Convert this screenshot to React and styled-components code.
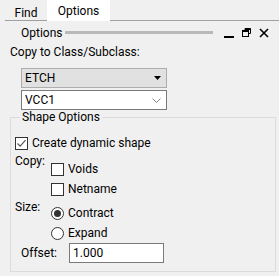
import React from 'react';
import styled, { createGlobalStyle } from 'styled-components';

const GlobalStyle = createGlobalStyle`
    html, body {
        margin: 0;
        padding: 0;
        background: #f0f0f0;
    }
    body {
        font-family: Roboto, "Liberation Sans", Arial, sans-serif;
        font-size: 12px;
        color: #000;
    }
    * { box-sizing: border-box; }
`;

const Panel = styled.div`
    width: 279px;
    height: 276px;
    background: #f0f0f0;
    overflow: hidden;
`;

const TabBar = styled.div`
    display: flex;
    align-items: flex-end;
    height: 21px;
    margin-left: 5px;
    border-bottom: 1px solid #a0a0a0;
`;

const Tab = styled.div`
    display: flex;
    align-items: center;
    justify-content: center;
    width: ${p => p.width}px;
    height: ${p => (p.active ? 21 : 15)}px;
    margin-bottom: ${p => (p.active ? -1 : 0)}px;
    background: ${p => (p.active ? '#fff' : '#f0f0f0')};
    line-height: 14px;
`;

const TitleRow = styled.div`
    display: flex;
    align-items: center;
    height: 23px;
    padding: 0 10px 0 21px;
`;

const Grip = styled.div`
    flex: 1;
    height: 3px;
    margin: 0 11px 0 2px;
    background: #b9b9b9;
`;

const WinButtons = styled.div`
    display: flex;
    align-items: center;
    gap: 8px;
    svg { display: block; }
`;

const Label = styled.div`
    height: 16px;
    line-height: 16px;
    padding-left: ${p => p.indent || 0}px;
`;

const Select = styled.div`
    display: flex;
    align-items: center;
    justify-content: space-between;
    width: 146px;
    height: 20px;
    margin: ${p => p.top}px 0 0 21px;
    padding: 0 5px 0 3px;
    background: ${p => (p.editable ? '#fff' : '#e1e1e1')};
    border: 1px solid ${p => (p.editable ? '#7a7a7a' : '#adadad')};
`;

const Group = styled.fieldset`
    height: 162px;
    margin: 0 3px 0 10px;
    padding: 9px 0 0 4px;
    border: 1px solid #dcdcdc;
    min-inline-size: 0;
`;

const Legend = styled.legend`
    margin-left: 5px;
    padding: 0 2px;
    line-height: 14px;
`;

const Row = styled.label`
    display: flex;
    align-items: center;
    gap: 4px;
    height: 20px;
`;

const Section = styled.div`
    display: flex;
`;

const SectionLabel = styled.div`
    width: 36px;
    line-height: 14px;
    padding-top: 1px;
`;

const Options = styled.div`
    display: flex;
    flex-direction: column;
    padding-top: ${p => p.top || 0}px;
`;

const Box = styled.span`
    display: flex;
    align-items: center;
    justify-content: center;
    width: 13px;
    height: 13px;
    background: #fff;
    border: 1px solid #333;
`;

const Radio = styled.span`
    display: flex;
    align-items: center;
    justify-content: center;
    width: 13px;
    height: 13px;
    background: #fff;
    border: 1px solid #333;
    border-radius: 50%;
    &::after {
        content: '';
        display: ${p => (p.checked ? 'block' : 'none')};
        width: 7px;
        height: 7px;
        border-radius: 50%;
        background: #333;
    }
`;

const OffsetRow = styled.div`
    display: flex;
    align-items: center;
    height: 20px;
    padding-left: 6px;
`;

const OffsetLabel = styled.span`
    width: 48px;
`;

const Input = styled.div`
    width: 95px;
    height: 20px;
    line-height: 18px;
    padding-left: 3px;
    background: #fff;
    border: 1px solid #7a7a7a;
`;

const Check = ({ checked }) => (
    <Box>
        {checked && (
            <svg width="11" height="11" viewBox="0 0 11 11">
                <path d="M1.5 5.5 L4.2 8.2 L9.5 2.2" fill="none" stroke="#555" strokeWidth="1.2" />
            </svg>
        )}
    </Box>
);

export default function App() {
    return (
        <Panel>
            <GlobalStyle />
            <TabBar>
                <Tab width={42}>Find</Tab>
                <Tab width={63} active>Options</Tab>
            </TabBar>
            <TitleRow>
                <span>Options</span>
                <Grip />
                <WinButtons>
                    <svg width="10" height="10" viewBox="0 0 10 10">
                        <rect x="0" y="8" width="10" height="2" fill="#000" />
                    </svg>
                    <svg width="9" height="9" viewBox="0 0 9 9">
                        <path d="M3 0.5 H8.5 V5.5 H6.5 M3 0.5 V2.5" fill="none" stroke="#000" strokeWidth="1" />
                        <rect x="0.5" y="2.5" width="6" height="6" fill="none" stroke="#000" strokeWidth="1" />
                        <rect x="0.5" y="2.5" width="6" height="1.5" fill="#000" />
                        <rect x="3" y="0.5" width="5.5" height="1.5" fill="#000" />
                    </svg>
                    <svg width="10" height="10" viewBox="0 0 10 10">
                        <path d="M1 1 L9 9 M9 1 L1 9" stroke="#000" strokeWidth="1.6" />
                    </svg>
                </WinButtons>
            </TitleRow>
            <Label indent={10}>Copy to Class/Subclass:</Label>
            <Select top={8}>
                <span>ETCH</span>
                <svg width="7" height="4" viewBox="0 0 7 4">
                    <path d="M0 0 H7 L3.5 4 Z" fill="#000" />
                </svg>
            </Select>
            <Select top={2} editable>
                <span>VCC1</span>
                <svg width="9" height="5" viewBox="0 0 9 5">
                    <path d="M0.5 0.5 L4.5 4.5 L8.5 0.5" fill="none" stroke="#888" strokeWidth="1" />
                </svg>
            </Select>
            <Group>
                <Legend>Shape Options</Legend>
                <Row>
                    <Check checked />
                    <span>Create dynamic shape</span>
                </Row>
                <Section>
                    <SectionLabel>Copy:</SectionLabel>
                    <Options top={6}>
                        <Row><Check /><span>Voids</span></Row>
                        <Row><Check /><span>Netname</span></Row>
                    </Options>
                </Section>
                <Section>
                    <SectionLabel>Size:</SectionLabel>
                    <Options top={4}>
                        <Row><Radio checked /><span>Contract</span></Row>
                        <Row><Radio /><span>Expand</span></Row>
                    </Options>
                </Section>
                <OffsetRow>
                    <OffsetLabel>Offset:</OffsetLabel>
                    <Input>1.000</Input>
                </OffsetRow>
            </Group>
        </Panel>
    );
}
